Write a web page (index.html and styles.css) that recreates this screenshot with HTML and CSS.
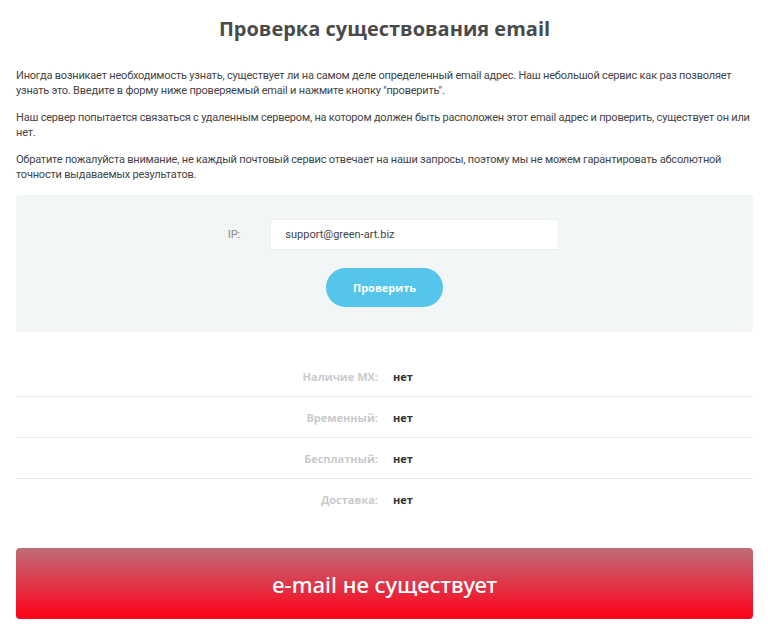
FILE: index.html
```html
<!DOCTYPE html>
<html lang="ru">
<head>
    <meta charset="UTF-8">
    <meta name="viewport" content="width=device-width, initial-scale=1.0">
    <title>Проверка существования email</title>
    <link rel="stylesheet" href="styles.css">
</head>
<body>

    <h1 class="title">Проверка существования email</h1>

    <div class="intro">
        <p>Иногда возникает необходимость узнать, существует ли на самом деле определенный email адрес. Наш небольшой сервис как раз позволяет узнать это. Введите в форму ниже проверяемый email и нажмите кнопку "проверить".</p>
        <p>Наш сервер попытается связаться с удаленным сервером, на котором должен быть расположен этот email адрес и проверить, существует он или нет.</p>
        <p>Обратите пожалуйста внимание, не каждый почтовый сервис отвечает на наши запросы, поэтому мы не можем гарантировать абсолютной точности выдаваемых результатов.</p>
    </div>

    <form class="check-form" onsubmit="return false">
        <div class="field">
            <label for="email">IP:</label>
            <input type="text" id="email" value="support@green-art.biz">
        </div>
        <button type="submit" class="btn">Проверить</button>
    </form>

    <div class="results">
        <div class="row"><span class="key">Наличие MX:</span><span class="val">нет</span></div>
        <div class="row"><span class="key">Временный:</span><span class="val">нет</span></div>
        <div class="row"><span class="key">Бесплатный:</span><span class="val">нет</span></div>
        <div class="row"><span class="key">Доставка:</span><span class="val">нет</span></div>
    </div>

    <div class="verdict">e-mail не существует</div>

</body>
</html>
```

FILE: styles.css
```css
body {
    margin: 0;
    padding: 0 15px 0 16px;
    background-color: #fff;
    font-family: "Roboto", "Open Sans", sans-serif;
    color: #444;
}
.title {
    margin: 0;
    padding: 16px 0 0;
    height: 52px;
    box-sizing: border-box;
    text-align: center;
    font-family: "Open Sans", sans-serif;
    font-size: 20px;
    font-weight: 700;
    color: #4a4a4a;
    line-height: 26px;
}
.intro {
    padding-top: 17px;
}
.intro p {
    margin: 0 0 13px;
    font-size: 11px;
    line-height: 14.5px;
    letter-spacing: -0.2px;
}
.check-form {
    margin-top: 6px;
    height: 137px;
    box-sizing: border-box;
    padding-top: 24px;
    background-color: #f3f6f7;
    border-radius: 3px;
    display: flex;
    flex-direction: column;
    align-items: center;
}
.field {
    display: flex;
    align-items: center;
    gap: 30px;
    margin-left: 18px;
}
.field label {
    font-size: 11px;
    color: #888;
}
.field input {
    width: 289px;
    height: 31px;
    box-sizing: border-box;
    padding: 0 14px;
    border: 1px solid #eceff0;
    border-radius: 2px;
    background-color: #fff;
    font-family: "Roboto", sans-serif;
    font-size: 11px;
    color: #444;
    outline: none;
}
.btn {
    margin-top: 18px;
    width: 117px;
    height: 39px;
    border: 0;
    border-radius: 20px;
    background-color: #55c5ec;
    color: #fff;
    font-family: "Open Sans", sans-serif;
    font-weight: 700;
    font-size: 11px;
    cursor: pointer;
}
.results {
    margin-top: 24px;
}
.row {
    display: flex;
    align-items: center;
    height: 40px;
    font-size: 11px;
    font-weight: 700;
    font-family: "Open Sans", sans-serif;
}
.row + .row {
    border-top: 1px solid #ececec;
}
.key {
    width: 362px;
    text-align: right;
    color: #c8cbce;
}
.val {
    margin-left: 15px;
    color: #333;
}
.verdict {
    margin-top: 29px;
    height: 71px;
    border-radius: 4px;
    background: linear-gradient(to bottom, #bf6d79, #ff0018);
    color: #fff;
    font-family: "Noto Sans", sans-serif;
    font-size: 22px;
    font-weight: 500;
    display: flex;
    justify-content: center;
    align-items: center;
}
```
